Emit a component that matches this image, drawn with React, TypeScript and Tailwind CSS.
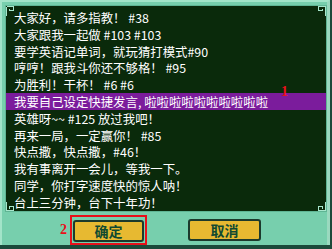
import React from 'react'

const lines = [
  '大家好，请多指教！ #38',
  '大家跟我一起做 #103 #103',
  '要学英语记单词，就玩猜打模式#90',
  '哼哼！跟我斗你还不够格！ #95',
  '为胜利！干杯！ #6 #6',
  '我要自己设定快捷发言, 啦啦啦啦啦啦啦啦啦啦',
  '英雄呀~~ #125 放过我吧！',
  '再来一局，一定赢你！ #85',
  '快点撒，快点撒，#46！',
  '我有事离开一会儿，等我一下。',
  '同学，你打字速度快的惊人呐！',
  '台上三分钟，台下十年功！',
]

const selected = 5

function Corner({ className }: { className: string }) {
  return (
    <svg
      className={`absolute w-[10px] h-[10px] ${className}`}
      viewBox="0 0 10 10"
      fill="none"
      stroke="#a6e6cc"
      strokeWidth="1.2"
      shapeRendering="crispEdges"
    >
      <path d="M0.5 0.5 H7.5 V4.5 H3.5 V2.5 M0.5 0.5 V9.5" />
    </svg>
  )
}

export default function App() {
  return (
    <div className="w-[332px] h-[249px] bg-[#1b4a3a] overflow-hidden">
      <div className="w-[330px] h-[245px] bg-[#77cfad] border-t-2 border-l-2 border-[#a3e4c9] border-r-[3px] border-r-[#9ad9bf] flex flex-col">
        <div className="relative ml-[3px] mt-[3px] w-[322px] h-[209px] bg-[#0a2a0b] border border-[#5fb594]">
          <Corner className="left-0 top-0" />
          <Corner className="right-0 top-0 -scale-x-100" />
          <Corner className="left-0 bottom-0 -scale-y-100" />
          <Corner className="right-0 bottom-0 scale-[-1]" />
          <ul
            className="pt-[3px] text-[12.4px] leading-[16.8px] text-white"
            style={{ fontFamily: '"Noto Sans CJK SC", "Noto Sans", sans-serif' }}
          >
            {lines.map((line, i) => (
              <li
                key={i}
                className={`pl-[8px] pt-[1px] h-[16.8px] whitespace-nowrap ${i === selected ? 'bg-[#7b1c9c]' : ''}`}
              >
                {line}
              </li>
            ))}
          </ul>
          <span
            className="absolute left-[275px] top-[79px] text-[14px] font-bold leading-none text-[#e8101a]"
            style={{ fontFamily: '"Liberation Serif", serif' }}
          >
            1
          </span>
        </div>
        <div
          className="flex items-center mt-[3px] pl-[58px]"
          style={{ fontFamily: '"Noto Sans CJK SC", sans-serif' }}
        >
          <span
            className="text-[14px] font-bold leading-none text-[#e8101a] mr-[3px]"
            style={{ fontFamily: '"Liberation Serif", serif' }}
          >
            2
          </span>
          <div className="border-2 border-[#e8101a] p-[1px]">
            <button className="w-[71px] h-[22px] rounded-[3px] border-2 border-[#1c3a2c] bg-[#e7b931] text-[14px] font-bold leading-none text-[#114a31]">
              确定
            </button>
          </div>
          <button className="ml-[41px] w-[73px] h-[22px] rounded-[3px] border-2 border-[#1c3a2c] bg-[#e7b931] text-[14px] font-bold leading-none text-[#114a31]">
            取消
          </button>
        </div>
      </div>
    </div>
  )
}
